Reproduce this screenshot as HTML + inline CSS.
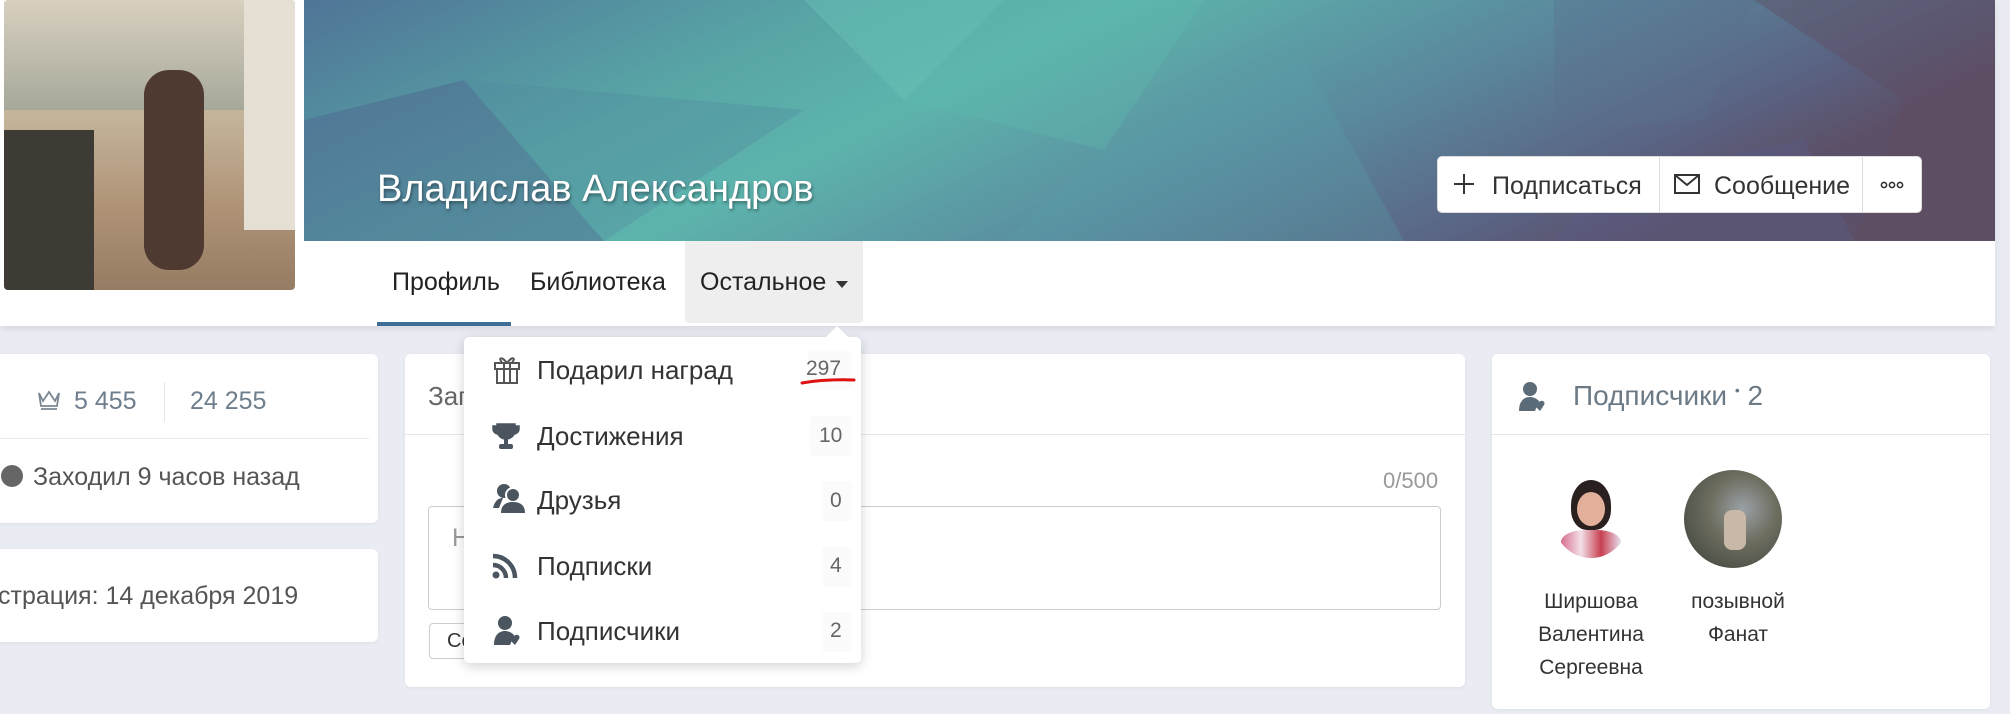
<!DOCTYPE html>
<html><head><meta charset="utf-8"><style>
*{margin:0;padding:0;box-sizing:border-box}
body{width:2010px;height:714px;overflow:hidden;background:#e9edf3;font-family:"Liberation Sans","DejaVu Sans",sans-serif;color:#333;position:relative}
.abs{position:absolute}
.card{position:absolute;background:#fff;border-radius:6px;box-shadow:0 1px 3px rgba(0,0,0,.06)}
.t{position:absolute;white-space:nowrap}
.bd{position:absolute;background:#fbfbfb;border-radius:4px;height:40px;width:36px}
</style></head><body>
<div class="abs" style="left:0;top:0;width:1995px;height:326px;background:#fff;box-shadow:0 3px 6px rgba(0,0,0,.08)"></div>
<svg class="abs" style="left:304px;top:0" width="1691" height="241" viewBox="0 0 1691 241" preserveAspectRatio="none">
<defs><linearGradient id="g" x1="0" y1="0" x2="1" y2="0.3"><stop offset="0" stop-color="#4f7497"/><stop offset="0.3" stop-color="#58a6a6"/><stop offset="0.45" stop-color="#5db4ad"/><stop offset="0.7" stop-color="#5a899d"/><stop offset="0.9" stop-color="#5a6282"/><stop offset="1" stop-color="#5c5068"/></linearGradient></defs>
<rect width="1691" height="241" fill="url(#g)"/>
<polygon points="0,120 160,80 300,241 0,241" fill="#4e6890" opacity=".5"/>
<polygon points="160,80 500,110 300,241" fill="#4f8a9e" opacity=".35"/>
<polygon points="500,0 700,0 600,100" fill="#6cc6b8" opacity=".4"/>
<polygon points="700,0 900,0 800,150 600,100" fill="#5fb9b0" opacity=".35"/>
<polygon points="800,150 1000,60 1100,241 700,241" fill="#5a9ea8" opacity=".3"/>
<polygon points="1250,0 1450,0 1400,120 1250,130" fill="#5d6f8f" opacity=".35"/>
<polygon points="1450,0 1691,0 1691,241 1550,241 1600,100" fill="#5e4a60" opacity=".4"/>
<polygon points="1300,180 1500,140 1550,241 1250,241" fill="#5b5d86" opacity=".4"/>
</svg>
<div class="abs" style="left:4px;top:0;width:291px;height:290px;border-radius:4px;background:linear-gradient(180deg,#b8b4a8 0%,#c4b49a 40%,#b09478 70%,#957c62 100%);overflow:hidden">
<div class="abs" style="left:0;top:0;width:291px;height:110px;background:linear-gradient(180deg,#d8d0c0,#a6a89a)"></div>
<div class="abs" style="left:0;top:130px;width:90px;height:160px;background:#3e3a34"></div>
<div class="abs" style="left:140px;top:70px;width:60px;height:200px;background:#4e3a30;border-radius:25px"></div>
<div class="abs" style="left:240px;top:0;width:51px;height:230px;background:#e6e0d4"></div>
</div>
<div class="t" style="left:377px;top:168px;font-size:38px;color:#fff;text-shadow:1px 2px 3px rgba(0,0,0,.4)">Владислав Александров</div>
<div class="abs" style="left:1437px;top:156px;width:485px;height:57px;background:#fff;border:1px solid #ddd;border-radius:5px"></div>
<div class="abs" style="left:1659px;top:157px;width:1px;height:55px;background:#ddd"></div>
<div class="abs" style="left:1862px;top:157px;width:1px;height:55px;background:#ddd"></div>
<svg class="abs" style="left:1453px;top:173px" width="22" height="22"><path d="M11 1V21M1 11H21" stroke="#333" stroke-width="2"/></svg>
<div class="t" style="left:1492px;top:172px;font-size:25px;color:#333">Подписаться</div>
<svg class="abs" style="left:1674px;top:174px" width="26" height="20"><rect x="1" y="1" width="24" height="18" fill="none" stroke="#333" stroke-width="2"/><path d="M1 1 L13 11 L25 1" fill="none" stroke="#333" stroke-width="2"/></svg>
<div class="t" style="left:1714px;top:172px;font-size:25px;color:#333">Сообщение</div>
<svg class="abs" style="left:1880px;top:181px" width="24" height="8"><circle cx="4" cy="4" r="2.6" fill="none" stroke="#333" stroke-width="1.6"/><circle cx="12" cy="4" r="2.6" fill="none" stroke="#333" stroke-width="1.6"/><circle cx="20" cy="4" r="2.6" fill="none" stroke="#333" stroke-width="1.6"/></svg>
<div class="abs" style="left:685px;top:241px;width:178px;height:82px;background:#eeeeee;border-radius:0 0 4px 4px"></div>
<div class="t" style="left:392px;top:268px;font-size:25px;color:#222">Профиль</div>
<div class="abs" style="left:377px;top:322px;width:134px;height:4px;background:#3d6e96"></div>
<div class="t" style="left:530px;top:268px;font-size:25px;color:#222">Библиотека</div>
<div class="t" style="left:700px;top:268px;font-size:25px;color:#222">Остальное</div>
<div class="abs" style="left:836px;top:281px;border:6px solid transparent;border-top:7px solid #333"></div>
<div class="card" style="left:-6px;top:354px;width:384px;height:169px"></div>
<svg class="abs" style="left:37px;top:389px" width="24" height="22"><path d="M2 4 L6 12 L12 3 L18 12 L22 4 L20 17 H4 Z M4 20 H20" fill="none" stroke="#7a8793" stroke-width="1.8"/></svg>
<div class="t" style="left:74px;top:387px;font-size:25px;color:#6e7e8c">5 455</div>
<div class="abs" style="left:164px;top:382px;width:1px;height:40px;background:#e5e5e5"></div>
<div class="t" style="left:190px;top:387px;font-size:25px;color:#6e7e8c">24 255</div>
<div class="abs" style="left:0;top:438px;width:369px;height:1px;background:#ebebeb"></div>
<div class="abs" style="left:1px;top:465px;width:22px;height:22px;border-radius:50%;background:#666"></div>
<div class="t" style="left:33px;top:463px;font-size:25px;color:#555">Заходил 9 часов назад</div>
<div class="card" style="left:-6px;top:549px;width:384px;height:93px"></div>
<div class="t" style="left:-2px;top:582px;font-size:25px;color:#555">страция: 14 декабря 2019</div>
<div class="card" style="left:405px;top:354px;width:1060px;height:333px"></div>
<div class="abs" style="left:405px;top:434px;width:1060px;height:1px;background:#e6e6e6"></div>
<div class="t" style="left:428px;top:381px;font-size:26px;color:#666">Зап</div>
<div class="t" style="left:1383px;top:468px;font-size:22px;color:#999">0/500</div>
<div class="abs" style="left:428px;top:506px;width:1013px;height:104px;border:1px solid #ccc;border-radius:4px;background:#fff"></div>
<div class="t" style="left:452px;top:524px;font-size:25px;color:#999">Н</div>
<div class="abs" style="left:429px;top:623px;width:80px;height:36px;border:1px solid #ccc;border-radius:4px"></div>
<div class="t" style="left:447px;top:630px;font-size:20px;color:#333">Со</div>
<div class="card" style="left:1492px;top:354px;width:498px;height:355px"></div>
<div class="abs" style="left:1492px;top:434px;width:498px;height:1px;background:#e6e6e6"></div>
<svg class="abs" style="left:1517px;top:380px" width="32" height="32" viewBox="0 0 32 32"><circle cx="13" cy="9" r="7" fill="#5b6b78"/><path d="M2 31 C2 20 8 17 13 17 C17 17 20 19 22 21 L18 31 Z" fill="#5b6b78"/><path d="M23 31 L17 25 C15 22 19 19 22 22 C25 19 29 22 27 25 Z" fill="#5b6b78"/></svg>
<div class="t" style="left:1573px;top:380px;font-size:28px;color:#6c7a86">Подписчики <span style="font-size:14px;vertical-align:10px">•</span> 2</div>
<div class="abs" style="left:1553px;top:478px;width:76px;height:80px;border-radius:50%;background:#fff;overflow:hidden">
<div class="abs" style="left:18px;top:2px;width:40px;height:50px;border-radius:50% 50% 40% 40%;background:#2a2020"></div>
<div class="abs" style="left:24px;top:14px;width:28px;height:34px;border-radius:50%;background:#e2b09a"></div>
<div class="abs" style="left:8px;top:52px;width:60px;height:30px;border-radius:40% 40% 0 0;background:linear-gradient(90deg,#d87090,#f2e0e8,#c84050,#e8e0f0)"></div>
</div>
<div class="abs" style="left:1684px;top:470px;width:98px;height:98px;border-radius:50%;background:radial-gradient(circle at 60% 40%,#9aa0a6 0%,#6e6e60 40%,#4a4e44 80%);overflow:hidden">
<div class="abs" style="left:40px;top:40px;width:22px;height:40px;background:#c8b8a8;border-radius:8px"></div>
</div>
<div class="abs" style="left:1530px;top:585px;width:122px;text-align:center;font-size:21px;line-height:33px;color:#333">Ширшова Валентина Сергеевна</div>
<div class="abs" style="left:1678px;top:585px;width:120px;text-align:center;font-size:21px;line-height:33px;color:#333">позывной Фанат</div>
<div class="abs" style="left:464px;top:337px;width:397px;height:326px;background:#fff;border-radius:5px;box-shadow:0 3px 12px rgba(0,0,0,.18)"></div>
<div class="abs" style="left:826px;top:326px;width:0;height:0;border:11px solid transparent;border-bottom:11px solid #fff;border-top:0"></div>
<div class="bd" style="left:808px;top:350px;width:44px"></div>
<div class="bd" style="left:810px;top:416px;width:42px"></div>
<div class="bd" style="left:822px;top:481px;width:30px"></div>
<div class="bd" style="left:822px;top:547px;width:30px"></div>
<div class="bd" style="left:822px;top:612px;width:30px"></div>
<svg class="abs" style="left:493px;top:354px" width="28" height="30" viewBox="0 0 28 30"><rect x="2" y="9" width="24" height="6" fill="none" stroke="#555" stroke-width="2"/><rect x="4" y="15" width="20" height="14" fill="none" stroke="#555" stroke-width="2"/><path d="M11 9 V29 M17 9 V29 M14 9 C8 1 5 5 9 8 M14 9 C20 1 23 5 19 8" fill="none" stroke="#555" stroke-width="2"/></svg>
<div class="t" style="left:537px;top:355px;font-size:26px;color:#333">Подарил наград</div>
<div class="t" style="left:806px;top:357px;font-size:21px;color:#666">297</div>
<svg class="abs" style="left:800px;top:376px" width="56" height="10"><path d="M2 7 Q25 3 54 4" stroke="#e01010" stroke-width="3" fill="none" stroke-linecap="round"/></svg>
<svg class="abs" style="left:491px;top:422px" width="30" height="28" viewBox="0 0 30 28"><path d="M6 2 H24 V8 C24 14 19 17 15 17 C11 17 6 14 6 8 Z M6 4 H2 V7 C2 10 5 12 7 12 M24 4 H28 V7 C28 10 25 12 23 12" fill="#4a5560" stroke="#4a5560" stroke-width="1.5"/><rect x="13" y="16" width="4" height="6" fill="#4a5560"/><rect x="8" y="22" width="14" height="5" rx="2" fill="#4a5560"/></svg>
<div class="t" style="left:537px;top:421px;font-size:26px;color:#333">Достижения</div>
<div class="t" style="left:819px;top:424px;font-size:21px;color:#666">10</div>
<svg class="abs" style="left:491px;top:482px" width="36" height="32" viewBox="0 0 36 32"><circle cx="13" cy="9" r="7" fill="#4a5560"/><path d="M2 26 C4 18 8 16 12 16 L8 26 Z" fill="#4a5560"/><circle cx="22" cy="13" r="7" fill="#4a5560" stroke="#fff" stroke-width="2"/><path d="M10 31 C10 23 15 20 22 20 C29 20 34 23 34 31 Z" fill="#4a5560"/></svg>
<div class="t" style="left:537px;top:485px;font-size:26px;color:#333">Друзья</div>
<div class="t" style="left:830px;top:489px;font-size:21px;color:#666">0</div>
<svg class="abs" style="left:491px;top:552px" width="28" height="28" viewBox="0 0 28 28"><circle cx="5" cy="23" r="3.5" fill="#4a5560"/><path d="M2 13 A13 13 0 0 1 15 26" stroke="#4a5560" stroke-width="4.5" fill="none"/><path d="M2 4 A22 22 0 0 1 24 26" stroke="#4a5560" stroke-width="4.5" fill="none"/></svg>
<div class="t" style="left:537px;top:551px;font-size:26px;color:#333">Подписки</div>
<div class="t" style="left:830px;top:554px;font-size:21px;color:#666">4</div>
<svg class="abs" style="left:492px;top:614px" width="32" height="32" viewBox="0 0 32 32"><circle cx="13" cy="9" r="7" fill="#4a5560"/><path d="M2 31 C2 20 8 17 13 17 C17 17 20 19 22 21 L18 31 Z" fill="#4a5560"/><path d="M23 31 L17 25 C15 22 19 19 22 22 C25 19 29 22 27 25 Z" fill="#4a5560"/></svg>
<div class="t" style="left:537px;top:616px;font-size:26px;color:#333">Подписчики</div>
<div class="t" style="left:830px;top:619px;font-size:21px;color:#666">2</div>
</body></html>
